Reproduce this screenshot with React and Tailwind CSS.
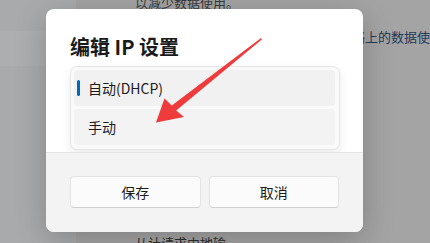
import React from 'react';

const font = { fontFamily: '"Noto Sans CJK SC", "Noto Sans", sans-serif' };

function Arrow() {
  return (
    <svg className="absolute left-0 top-0 pointer-events-none" width="430" height="243" viewBox="0 0 430 243">
      <polygon
        points="261,38 261.8,39.6 176.2,110.5 184,117 156,122.5 164.5,98.5 171.8,105.5"
        fill="#ef3b3b"
      />
    </svg>
  );
}

export default function App() {
  return (
    <div className="relative w-[430px] h-[243px] overflow-hidden flex text-[#1b1b1b]" style={font}>
      {/* page behind the dialog */}
      <div className="w-[86px] bg-[#a9aaac] flex flex-col">
        <div className="h-[31px]" />
        <div className="h-[35px] bg-[#adaeb0]" />
      </div>
      <div className="flex-1 bg-[#a4a4a4] flex flex-col">
        <div className="pl-[59px] -mt-[5px] text-[13px] leading-[16px] text-[#3a3a3a]">以减少数据使用。</div>
        <div className="pl-[276px] mt-[18px] text-[13px] leading-[16px] text-[#22395a] whitespace-nowrap">络上的数据使</div>
        <div className="flex-1" />
        <div className="pl-[59px] -mb-[8px] text-[13px] leading-[16px] text-[#2e2e2e]">从计请求中地输</div>
      </div>

      {/* dialog */}
      <div className="absolute left-[46px] top-[9px] w-[317px] h-[223px] rounded-[8px] bg-white overflow-hidden shadow-[0_8px_32px_rgba(0,0,0,0.22)] flex flex-col">
        <div className="h-[143px] px-[24px] pt-[24px] flex flex-col">
          <div className="text-[20px] leading-[28px] font-semibold">编辑 IP 设置</div>
          <div className="mt-[5px] w-[270px] h-[84px] rounded-[7px] border border-[#e6e6e6] bg-[#fafafa] shadow-[0_4px_10px_rgba(0,0,0,0.08)] pl-[3px] pr-[4px] py-[3px] flex flex-col gap-[3px]">
            <div className="relative h-[36px] rounded-[4px] bg-[#f1f1f1] flex items-center pl-[14px] text-[14px]">
              <span className="absolute left-[3px] top-[10px] w-[3px] h-[16px] rounded-full bg-[#0067c0]" />
              自动(DHCP)
            </div>
            <div className="h-[36px] rounded-[4px] bg-[#f3f3f3] flex items-center pl-[14px] text-[14px]">手动</div>
          </div>
        </div>
        <div className="flex-1 border-t border-[#e5e5e5] bg-[#f3f3f3] p-[24px] pt-[23px] flex gap-[8px]">
          <button className="flex-1 h-[32px] rounded-[4px] bg-[#fbfbfb] border border-[#e3e3e3] border-b-[#d0d0d0] text-[14px]">保存</button>
          <button className="flex-1 h-[32px] rounded-[4px] bg-[#fbfbfb] border border-[#e3e3e3] border-b-[#d0d0d0] text-[14px]">取消</button>
        </div>
      </div>

      <Arrow />
    </div>
  );
}
